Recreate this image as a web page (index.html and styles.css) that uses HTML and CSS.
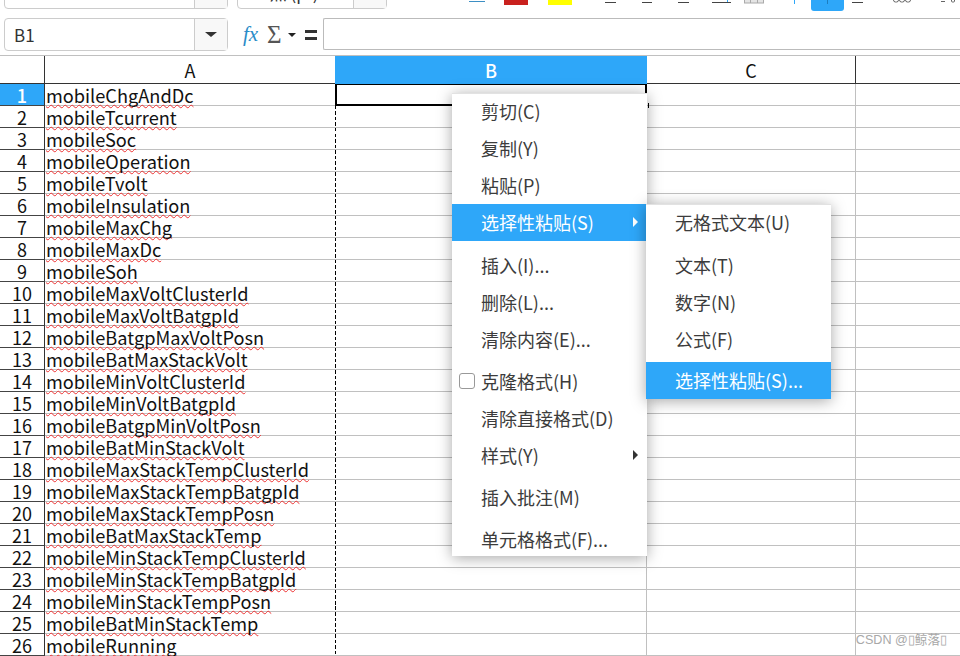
FILE: index.html
```html
<!DOCTYPE html>
<html lang="zh-CN">
<head>
    <meta charset="UTF-8">
    <meta name="viewport" content="width=device-width, initial-scale=1.0">
    <title>Calc</title>
    <link rel="stylesheet" href="styles.css">
</head>
<body>

    <!-- top toolbar, cut off by the screenshot -->
    <div class="toolbar">
        <div class="combo combo-font"><span class="combo-text">Set Sans Mono</span><span class="combo-btn"></span></div>
        <div class="combo combo-size"><span class="combo-text">11 点 (pt)</span><span class="combo-btn"></span></div>
        <svg class="tool-icons" xmlns="http://www.w3.org/2000/svg" width="570" height="18" viewBox="390 0 570 18">
            <rect x="471" y="1" width="16" height="1" fill="#3d8fc4"/>
            <rect x="506" y="0" width="24" height="5" fill="#c9211e"/>
            <rect x="550" y="0" width="24" height="5" fill="#ffff00"/>
            <rect x="607" y="2" width="11" height="1" fill="#444"/>
            <rect x="644" y="2" width="10" height="1" fill="#444"/>
            <rect x="680" y="2" width="11" height="1" fill="#444"/>
            <rect x="714" y="2" width="19" height="1" fill="#444"/>
            <rect x="729" y="0" width="1" height="2" fill="#2ea7f9"/>
            <rect x="746.5" y="-3" width="19" height="6" fill="#e4e4e4" stroke="#aaa"/>
            <rect x="752" y="0" width="1" height="3" fill="#aaa"/>
            <rect x="759" y="0" width="1" height="3" fill="#aaa"/>
            <rect x="796" y="0" width="1" height="4" fill="#2ea7f9"/>
            <rect x="813" y="-6" width="33" height="17" rx="3" fill="#2ea7f9"/>
            <rect x="829" y="0" width="1" height="4" fill="#1c7dbf"/>
            <rect x="854" y="2" width="11" height="1" fill="#444"/>
            <rect x="895.5" y="-3" width="5" height="5" rx="2" fill="none" stroke="#666"/>
            <rect x="901.5" y="-3" width="5" height="5" rx="2" fill="none" stroke="#666"/>
            <rect x="907.5" y="-3" width="5" height="5" rx="2" fill="none" stroke="#666"/>
            <rect x="943" y="1" width="4" height="1" fill="#666"/>
            <rect x="953.5" y="-3" width="3" height="5" rx="1" fill="none" stroke="#666"/>
        </svg>
    </div>

    <div class="formula-bar">
        <div class="combo combo-name"><span class="combo-text">B1</span><span class="combo-btn"><span class="caret"></span></span></div>
        <div class="formula-tools">
            <span class="fx">fx</span>
            <span class="sigma">Σ</span>
            <span class="caret caret-small"></span>
            <svg class="equals" xmlns="http://www.w3.org/2000/svg" width="12" height="10" viewBox="0 0 12 10">
                <rect x="0" y="0" width="12" height="3" fill="#333"/>
                <rect x="0" y="7" width="12" height="3" fill="#333"/>
            </svg>
        </div>
        <div class="formula-input"></div>
    </div>

    <div class="sheet">
        <div class="col-head">
            <div class="corner"></div>
            <div class="col-name">A</div>
            <div class="col-name col-active">B</div>
            <div class="col-name col-c">C</div>
            <div class="col-name col-d">D</div>
        </div>
        <div class="row"><div class="num num-active">1</div><div class="a"><span class="word">mobileChgAndDc</span></div><div class="b b-selected"></div><div class="c"></div><div class="d"></div></div>
        <div class="row"><div class="num">2</div><div class="a"><span class="word">mobileTcurrent</span></div><div class="b"></div><div class="c"></div><div class="d"></div></div>
        <div class="row"><div class="num">3</div><div class="a"><span class="word">mobileSoc</span></div><div class="b"></div><div class="c"></div><div class="d"></div></div>
        <div class="row"><div class="num">4</div><div class="a"><span class="word">mobileOperation</span></div><div class="b"></div><div class="c"></div><div class="d"></div></div>
        <div class="row"><div class="num">5</div><div class="a"><span class="word">mobileTvolt</span></div><div class="b"></div><div class="c"></div><div class="d"></div></div>
        <div class="row"><div class="num">6</div><div class="a"><span class="word">mobileInsulation</span></div><div class="b"></div><div class="c"></div><div class="d"></div></div>
        <div class="row"><div class="num">7</div><div class="a"><span class="word">mobileMaxChg</span></div><div class="b"></div><div class="c"></div><div class="d"></div></div>
        <div class="row"><div class="num">8</div><div class="a"><span class="word">mobileMaxDc</span></div><div class="b"></div><div class="c"></div><div class="d"></div></div>
        <div class="row"><div class="num">9</div><div class="a"><span class="word">mobileSoh</span></div><div class="b"></div><div class="c"></div><div class="d"></div></div>
        <div class="row"><div class="num">10</div><div class="a"><span class="word">mobileMaxVoltClusterId</span></div><div class="b"></div><div class="c"></div><div class="d"></div></div>
        <div class="row"><div class="num">11</div><div class="a"><span class="word">mobileMaxVoltBatgpId</span></div><div class="b"></div><div class="c"></div><div class="d"></div></div>
        <div class="row"><div class="num">12</div><div class="a"><span class="word">mobileBatgpMaxVoltPosn</span></div><div class="b"></div><div class="c"></div><div class="d"></div></div>
        <div class="row"><div class="num">13</div><div class="a"><span class="word">mobileBatMaxStackVolt</span></div><div class="b"></div><div class="c"></div><div class="d"></div></div>
        <div class="row"><div class="num">14</div><div class="a"><span class="word">mobileMinVoltClusterId</span></div><div class="b"></div><div class="c"></div><div class="d"></div></div>
        <div class="row"><div class="num">15</div><div class="a"><span class="word">mobileMinVoltBatgpId</span></div><div class="b"></div><div class="c"></div><div class="d"></div></div>
        <div class="row"><div class="num">16</div><div class="a"><span class="word">mobileBatgpMinVoltPosn</span></div><div class="b"></div><div class="c"></div><div class="d"></div></div>
        <div class="row"><div class="num">17</div><div class="a"><span class="word">mobileBatMinStackVolt</span></div><div class="b"></div><div class="c"></div><div class="d"></div></div>
        <div class="row"><div class="num">18</div><div class="a"><span class="word">mobileMaxStackTempClusterId</span></div><div class="b"></div><div class="c"></div><div class="d"></div></div>
        <div class="row"><div class="num">19</div><div class="a"><span class="word">mobileMaxStackTempBatgpId</span></div><div class="b"></div><div class="c"></div><div class="d"></div></div>
        <div class="row"><div class="num">20</div><div class="a"><span class="word">mobileMaxStackTempPosn</span></div><div class="b"></div><div class="c"></div><div class="d"></div></div>
        <div class="row"><div class="num">21</div><div class="a"><span class="word">mobileBatMaxStackTemp</span></div><div class="b"></div><div class="c"></div><div class="d"></div></div>
        <div class="row"><div class="num">22</div><div class="a"><span class="word">mobileMinStackTempClusterId</span></div><div class="b"></div><div class="c"></div><div class="d"></div></div>
        <div class="row"><div class="num">23</div><div class="a"><span class="word">mobileMinStackTempBatgpId</span></div><div class="b"></div><div class="c"></div><div class="d"></div></div>
        <div class="row"><div class="num">24</div><div class="a"><span class="word">mobileMinStackTempPosn</span></div><div class="b"></div><div class="c"></div><div class="d"></div></div>
        <div class="row"><div class="num">25</div><div class="a"><span class="word">mobileBatMinStackTemp</span></div><div class="b"></div><div class="c"></div><div class="d"></div></div>
        <div class="row"><div class="num">26</div><div class="a"><span class="word">mobileRunning</span></div><div class="b"></div><div class="c"></div><div class="d"></div></div>
    </div>

    <!-- context menu -->
    <div class="menu menu-main">
        <div class="item">剪切(C)</div>
        <div class="item">复制(Y)</div>
        <div class="item">粘贴(P)</div>
        <div class="item item-active">选择性粘贴(S)<span class="arrow"></span></div>
        <div class="sep"></div>
        <div class="item">插入(I)...</div>
        <div class="item">删除(L)...</div>
        <div class="item">清除内容(E)...</div>
        <div class="sep"></div>
        <div class="item"><span class="check"></span>克隆格式(H)</div>
        <div class="item">清除直接格式(D)</div>
        <div class="item">样式(Y)<span class="arrow"></span></div>
        <div class="sep"></div>
        <div class="item">插入批注(M)</div>
        <div class="sep"></div>
        <div class="item item-last">单元格格式(F)...</div>
    </div>

    <div class="menu menu-sub">
        <div class="item">无格式文本(U)</div>
        <div class="sep"></div>
        <div class="item">文本(T)</div>
        <div class="item">数字(N)</div>
        <div class="item">公式(F)</div>
        <div class="sep sep-small"></div>
        <div class="item item-active">选择性粘贴(S)...</div>
    </div>

    <div class="watermark">CSDN @▯鲸落▯</div>

</body>
</html>
```

FILE: styles.css
```css
html, body {
    margin: 0;
    height: 656px;
    overflow: hidden;
}
body {
    position: relative;
    background-color: #fff;
    color: #111;
    font-family: "Noto Sans CJK SC", "Noto Sans", sans-serif;
    font-size: 18px;
}

/* toolbars */
.toolbar {
    display: flex;
    height: 18px;
    padding-left: 4px;
    gap: 9px;
    overflow: hidden;
}
.combo {
    display: flex;
    box-sizing: border-box;
    height: 33px;
    border: 1px solid #ccc;
    border-radius: 4px;
    background-color: #fff;
    flex-shrink: 0;
}
.combo-font {
    width: 224px;
    margin-top: -24px;
}
.combo-size {
    width: 150px;
    margin-top: -24px;
}
.combo-name {
    width: 224px;
}
.combo-text {
    flex: 1;
    padding-left: 9px;
    font-size: 17px;
    line-height: 31px;
    color: #333;
}
.toolbar .combo-text {
    line-height: 32px;
}
.combo-btn {
    display: flex;
    align-items: center;
    justify-content: center;
    width: 32px;
    border-left: 1px solid #ccc;
    background-color: #f8f8f8;
}
.tool-icons {
    flex-shrink: 0;
    margin-left: -8px;
}
.caret {
    width: 0;
    height: 0;
    border-left: 6px solid transparent;
    border-right: 6px solid transparent;
    border-top: 5px solid #333;
}
.formula-bar {
    display: flex;
    height: 37px;
    padding-left: 4px;
}
.formula-tools {
    display: flex;
    align-items: center;
    width: 95px;
    height: 33px;
    padding-left: 15px;
    box-sizing: border-box;
}
.fx {
    font-family: "Liberation Serif", serif;
    font-style: italic;
    font-size: 21px;
    color: #2a8cc8;
    width: 24px;
}
.sigma {
    font-family: "Liberation Serif", serif;
    font-size: 25px;
    color: #555;
    width: 21px;
}
.caret-small {
    border-left-width: 4px;
    border-right-width: 4px;
    border-top-width: 4px;
    margin-top: 1px;
    margin-right: 9px;
    border-top-color: #222;
}
.equals {
    flex-shrink: 0;
}
.formula-input {
    flex: 1;
    box-sizing: border-box;
    height: 32px;
    border: 1px solid #bbb;
    border-right: none;
    border-radius: 2px 0 0 2px;
}

/* sheet */
.sheet {
    border-top: 1px solid #c0c0c0;
}
.col-head, .row {
    display: grid;
    grid-template-columns: 45px 290px 312px 209px 104px;
}
.col-head {
    height: 28px;
    box-sizing: border-box;
    border-bottom: 1px solid #333;
    line-height: 28px;
    font-size: 18px;
    text-align: center;
}
.corner {
    border-right: 1px solid #333;
}
.col-active {
    background-color: #2ea7f9;
    color: #fff;
    font-weight: 500;
}
.col-c {
    border-right: 1px solid #333;
}
.col-d {
    box-sizing: border-box;
    padding-left: 103px;
    overflow: hidden;
}
.row {
    height: 22px;
}
.row > div {
    box-sizing: border-box;
    height: 22px;
    border-bottom: 1px solid #c0c0c0;
}
.row > .num {
    border-right: 1px solid #333;
    border-bottom-color: #444;
    line-height: 22px;
    font-size: 18px;
    text-align: center;
}
.row > .num-active {
    background-color: #2ea7f9;
    color: #fff;
    font-weight: 500;
}
.a {
    position: relative;
    padding-left: 1px;
    white-space: nowrap;
    font-size: 18.2px;
    line-height: 23px;
}
.word {
    text-decoration: underline wavy #e33;
    text-decoration-thickness: 1.4px;
    text-decoration-skip-ink: none;
    text-underline-offset: 1px;
}
.b {
    border-right: 1px solid #c0c0c0;
    background: repeating-linear-gradient(#000 0 3.5px, transparent 3.5px 5.5px) left top / 1px 100% no-repeat;
}
.c {
    border-right: 1px solid #c0c0c0;
}
.row > .b-selected {
    position: relative;
    border: 2px solid #000;
    border-top-width: 1px;
    background: none;
}
.b-selected::after {
    content: "";
    position: absolute;
    right: -4px;
    top: 18px;
    width: 1px;
    height: 5px;
    background-color: #000;
}

/* context menu */
.menu {
    position: absolute;
    background-color: #fff;
    color: #3c3c3c;
    box-shadow: 0 2px 14px rgba(0, 0, 0, 0.35), inset 0 1px 0 #e2e2e2;
}
.menu-main {
    left: 452px;
    top: 93px;
    width: 195px;
}
.menu-sub {
    left: 646px;
    top: 204px;
    width: 185px;
}
.item {
    display: flex;
    align-items: center;
    box-sizing: border-box;
    height: 37px;
    padding: 0 9px 2px 29px;
    white-space: nowrap;
}
.item-active {
    background-color: #2ea7f9;
    color: #fff;
}
.item-last {
    height: 35px;
    padding-bottom: 0;
}
.sep {
    height: 6px;
}
.menu-main .sep {
    height: 5px;
}
.menu-main .item-active + .sep {
    height: 6px;
}
.menu-sub .sep-small {
    height: 4px;
}
.arrow {
    margin-left: auto;
    width: 0;
    height: 0;
    border-top: 5px solid transparent;
    border-bottom: 5px solid transparent;
    border-left: 5px solid #333;
}
.item-active .arrow {
    border-left-color: #fff;
}
.check {
    box-sizing: border-box;
    width: 16px;
    height: 16px;
    margin-left: -22px;
    margin-right: 6px;
    border: 1px solid #999;
    border-radius: 3px;
}

.watermark {
    position: absolute;
    right: 13px;
    bottom: 7px;
    font-family: "Liberation Sans", "Noto Sans CJK SC", sans-serif;
    font-size: 12.6px;
    line-height: 18px;
    color: #a8a8a8;
}
```
